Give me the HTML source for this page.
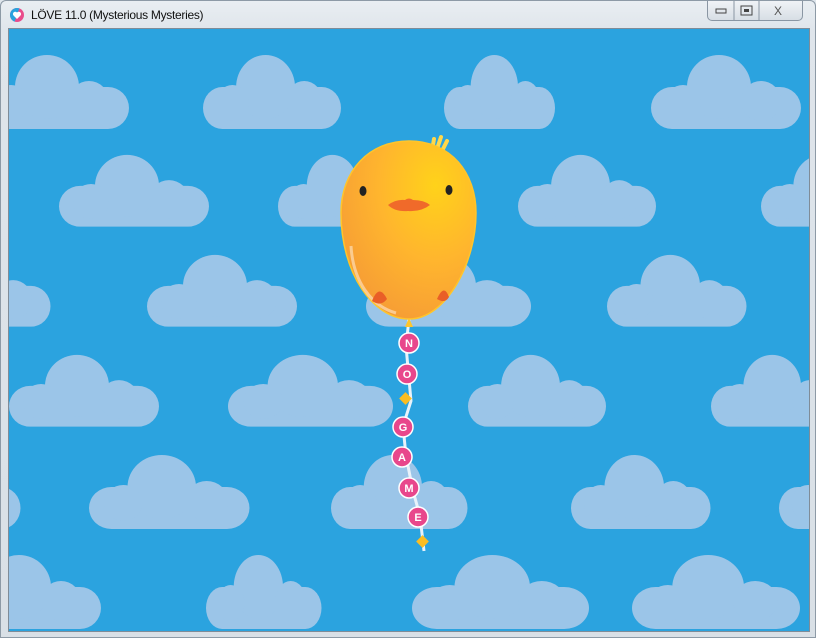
<!DOCTYPE html>
<html><head><style>
*{margin:0;padding:0}
body{width:816px;height:638px;overflow:hidden;background:#dfe6ec;font-family:"Liberation Sans",sans-serif}
.win{position:absolute;left:0;top:0;width:814px;height:636px;border:1px solid #8d9aa6;border-radius:6px 6px 0 0;background:linear-gradient(#e9eef2,#dfe5eb 30px,#d9e0e6)}
.title{position:absolute;left:30px;top:7px;font-size:12px;letter-spacing:-0.3px;color:#111}
.btns{position:absolute;left:706px;top:0;width:94px;height:19px;border:1px solid #8a96a3;border-top:none;border-radius:0 0 5px 5px;background:linear-gradient(#f0f3f6,#d7dee5)}
.canvas{position:absolute;left:7px;top:27px;width:800px;height:602px;border:1px solid #7f8c98;overflow:hidden}
</style></head><body>
<div class="win">
<svg style="position:absolute;left:8px;top:6px" width="16" height="16" viewBox="0 0 16 16"><circle cx="8" cy="8" r="7" fill="#e94c8b"/><path d="M8 1a7 7 0 0 1 0 14z" fill="#2aa3de" transform="rotate(200 8 8)"/><path d="M8 12 4.5 8.5a2 2 0 0 1 3.5-3 2 2 0 0 1 3.5 3z" fill="#fff"/></svg>
<div class="title">LÖVE 11.0 (Mysterious Mysteries)</div>
<div class="btns">
<svg width="94" height="19"><line x1="26" y1="0" x2="26" y2="19" stroke="#8a96a3"/><line x1="51" y1="0" x2="51" y2="19" stroke="#8a96a3"/>
<rect x="8" y="8" width="10" height="4" fill="none" stroke="#444" stroke-width="1"/><rect x="33" y="5" width="11" height="9" fill="none" stroke="#444"/><rect x="36" y="8" width="5" height="3" fill="#444"/>
<text x="66" y="14" font-size="12" fill="#555" font-family="Liberation Sans">X</text></svg></div>
<div class="canvas">
<svg width="802" height="604" viewBox="8 28 802 604">
<defs>
<g id="c"><rect x="0" y="36" width="150" height="42" rx="21"/><circle cx="68" cy="36" r="32"/><circle cx="110" cy="50" r="20"/><circle cx="32" cy="52" r="18"/></g>
<radialGradient id="bg" cx="0.7" cy="0.25" r="0.85"><stop offset="0" stop-color="#ffd21a"/><stop offset="0.5" stop-color="#ffb52e"/><stop offset="1" stop-color="#f59a36"/></radialGradient>
</defs>
<rect x="8" y="28" width="802" height="604" fill="#2ba3df"/>
<g fill="#9bc5e8">
<use href="#c" transform="translate(-22,50) scale(1,1)"/>
<use href="#c" transform="translate(202,50) scale(0.92,1)"/>
<use href="#c" transform="translate(443,50) scale(0.74,1)"/>
<use href="#c" transform="translate(650,50) scale(1,1)"/>
<use href="#c" transform="translate(58,150) scale(1,0.97)"/>
<use href="#c" transform="translate(277,150) scale(0.8,0.97)"/>
<use href="#c" transform="translate(517,150) scale(0.92,0.97)"/>
<use href="#c" transform="translate(760,150) scale(0.9,0.97)"/>
<use href="#c" transform="translate(-90,250) scale(0.93,0.97)"/>
<use href="#c" transform="translate(146,250) scale(1,0.97)"/>
<use href="#c" transform="translate(365,250) scale(1.1,0.97)"/>
<use href="#c" transform="translate(606,250) scale(0.93,0.97)"/>
<use href="#c" transform="translate(8,350) scale(1,0.97)"/>
<use href="#c" transform="translate(227,350) scale(1.1,0.97)"/>
<use href="#c" transform="translate(467,350) scale(0.92,0.97)"/>
<use href="#c" transform="translate(710,350) scale(0.9,0.97)"/>
<use href="#c" transform="translate(-120,450) scale(0.93,1)"/>
<use href="#c" transform="translate(88,450) scale(1.07,1)"/>
<use href="#c" transform="translate(330,450) scale(0.91,1)"/>
<use href="#c" transform="translate(570,450) scale(0.93,1)"/>
<use href="#c" transform="translate(778,450) scale(0.9,1)"/>
<use href="#c" transform="translate(-50,550) scale(1,1)"/>
<use href="#c" transform="translate(205,550) scale(0.77,1)"/>
<use href="#c" transform="translate(411,550) scale(1.18,1)"/>
<use href="#c" transform="translate(631,550) scale(1.12,1)"/>
</g>
<path d="M408 318 L405 345 L410 400 L402 425 L405 455 L412 490 L419 515 L423 550" fill="none" stroke="#e8f2fa" stroke-width="3"/>
<path d="M431 150 l2 -12 M436 148 l4 -12 M441 150 l5 -10" stroke="#ffd84a" stroke-width="4" stroke-linecap="round"/>
<path d="M408 140 C450 140 475 172 475 212 C475 262 445 318 408 318 C372 318 340 272 340 212 C340 170 368 140 408 140Z" fill="url(#bg)" stroke="#ffc52a" stroke-width="1.5"/>
<path d="M350 245 C352 280 370 305 395 312" fill="none" stroke="#fff" stroke-opacity=".45" stroke-width="3"/>
<ellipse cx="362" cy="190" rx="3.5" ry="5" fill="#222"/><ellipse cx="448" cy="189" rx="3.5" ry="5" fill="#222"/>
<path d="M387 204 Q395 198 404 199 Q408 196 412 199 Q423 199 429 204 Q420 211 407 210 Q394 211 387 204Z" fill="#f06a2a"/>
<path d="M371 300 Q378 282 386 298 Q380 306 371 300Z" fill="#e95f27"/><path d="M436 298 Q443 282 448 296 Q444 303 436 298Z" fill="#e95f27"/>
<path d="M404 326 l4 -9 l4 9z" fill="#ffc52a"/>
<g fill="#e8478c" stroke="#fff" stroke-width="1.5">
<circle cx="408" cy="342" r="10"/><circle cx="406" cy="373" r="10"/><circle cx="402" cy="426" r="10"/><circle cx="401" cy="456" r="10"/><circle cx="408" cy="487" r="10"/><circle cx="417" cy="516" r="10"/></g>
<g fill="#fff" font-size="11" font-weight="bold" text-anchor="middle" font-family="Liberation Sans">
<text x="408" y="346">N</text><text x="406" y="377">O</text><text x="402" y="430">G</text><text x="401" y="460">A</text><text x="408" y="491">M</text><text x="417" y="520">E</text></g>
<rect x="400" y="393" width="9" height="9" fill="#fbbd22" transform="rotate(45 404.5 397.5)"/>
<rect x="417" y="536" width="9" height="9" fill="#fbbd22" transform="rotate(45 421.5 540.5)"/>
</svg></div>
</div>
</body></html>
